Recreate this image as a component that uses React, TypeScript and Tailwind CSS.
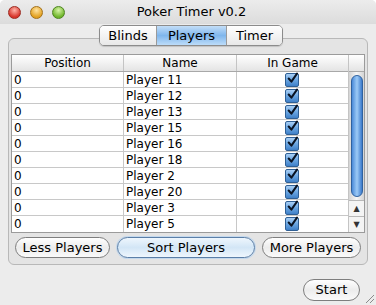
import React from "react"

const players = [
  "Player 11",
  "Player 12",
  "Player 13",
  "Player 15",
  "Player 16",
  "Player 18",
  "Player 2",
  "Player 20",
  "Player 3",
  "Player 5",
]

function Light({ from, to, ring }: { from: string; to: string; ring: string }) {
  return (
    <div
      className="w-[13px] h-[13px] rounded-full border"
      style={{ background: `radial-gradient(circle at 50% 30%, ${from}, ${to} 70%)`, borderColor: ring }}
    />
  )
}

function Check() {
  return (
    <div className="w-[14px] h-[14px] rounded-[2px] border border-[#2f5f94] bg-gradient-to-b from-[#a9cff5] via-[#6aa6e2] to-[#3f80c8] flex items-center justify-center">
      <svg width="13" height="13" viewBox="0 0 13 13" className="-mt-[3px] ml-[1px]">
        <path d="M2 6.5 L5.2 10.2 L11.8 0.8" fill="none" stroke="#0a1424" strokeWidth="2.4" strokeLinecap="round" strokeLinejoin="round" />
      </svg>
    </div>
  )
}

function Pill({ children, primary, className }: { children: React.ReactNode; primary?: boolean; className?: string }) {
  return (
    <button
      className={
        "h-[21px] rounded-full border text-[13px] text-black flex items-center justify-center " +
        (primary
          ? "border-[#5b7fa8] bg-gradient-to-b from-[#eef6fd] via-[#d3e6f6] to-[#eef6fd] shadow-[0_0_0_1px_#c4d8ec] "
          : "border-[#7e7e7e] bg-gradient-to-b from-[#ffffff] via-[#ececec] to-[#fafafa] ") +
        (className ?? "")
      }
    >
      {children}
    </button>
  )
}

export default function App() {
  return (
    <div
      className="w-[376px] h-[305px] bg-[#ececec] flex flex-col overflow-hidden rounded-t-[5px]"
      style={{ fontFamily: '"DejaVu Sans", "Liberation Sans", sans-serif' }}
    >
      {/* title bar */}
      <div className="h-[24px] flex items-center px-[8px] bg-gradient-to-b from-[#ececec] to-[#dcdcdc] relative">
        <div className="flex gap-[9px] pt-[1px]">
          <Light from="#ffb3a8" to="#d7342a" ring="#9c2a20" />
          <Light from="#ffe3a0" to="#e2a01f" ring="#a2701a" />
          <Light from="#d8f5a8" to="#6fb52a" ring="#4d8420" />
        </div>
        <div className="flex-1 text-center text-[13px] text-black pr-[60px] pl-[10px]">Poker Timer v0.2</div>
      </div>

      {/* tabs */}
      <div className="flex justify-center pl-[6px] mt-[1px] -mb-[8px] relative z-10">
        <div className="flex h-[21px] rounded-[5px] border border-[#8c8c8c] overflow-hidden text-[13px] text-black shadow-[0_1px_1px_rgba(0,0,0,0.15)]">
          <div className="w-[57px] flex items-center justify-center bg-gradient-to-b from-[#ffffff] to-[#e8e8e8] border-r border-[#9a9a9a]">Blinds</div>
          <div className="w-[69px] flex items-center justify-center bg-gradient-to-b from-[#c3def8] via-[#7fb6ec] to-[#bcdcf9]">Players</div>
          <div className="w-[56px] flex items-center justify-center bg-gradient-to-b from-[#ffffff] to-[#e8e8e8] border-l border-[#9a9a9a]">Timer</div>
        </div>
      </div>

      {/* group box */}
      <div className="mx-[8px] h-[227px] border border-[#b8b8b8] rounded-[6px] bg-[#e4e4e4] px-[2px] pt-[15px] flex flex-col">
        <div className="border border-[#9b9b9b] bg-white flex">
          <div className="flex-1">
            <div className="flex h-[17px] text-[12px] text-black bg-gradient-to-b from-[#ffffff] to-[#e4e4e4] border-b border-[#a8a8a8]">
              <div className="w-[112px] flex items-center justify-center border-r border-[#c4c4c4]">Position</div>
              <div className="w-[113px] flex items-center justify-center border-r border-[#c4c4c4]">Name</div>
              <div className="flex-1 flex items-center justify-center">In Game</div>
            </div>
            {players.map((p) => (
              <div key={p} className="flex h-[16px] text-[12px] text-black border-b border-[#c8c8c8] last:border-b-0">
                <div className="w-[112px] pl-[2px] flex items-center border-r border-[#c8c8c8]">0</div>
                <div className="w-[113px] pl-[2px] flex items-center border-r border-[#c8c8c8]">{p}</div>
                <div className="flex-1 flex items-center justify-center pr-[1px]">
                  <Check />
                </div>
              </div>
            ))}
          </div>
          {/* scrollbar */}
          <div className="w-[16px] border-l border-[#c4c4c4] flex flex-col bg-[#f4f4f4]">
            <div className="h-[17px] bg-gradient-to-b from-[#ffffff] to-[#e4e4e4] border-b border-[#a8a8a8]" />
            <div className="flex-1 flex flex-col items-center pt-[3px] pb-[2px] bg-gradient-to-r from-[#d4d4d4] via-[#f6f6f6] to-[#d4d4d4]">
              <div className="w-[12px] h-[122px] rounded-full border border-[#2f62a0] bg-gradient-to-r from-[#4a8ad8] via-[#9ccaf6] to-[#3b7acb]" />
            </div>
            <div className="h-[16px] flex items-center justify-center border-t border-[#b8b8b8] text-[8px] text-[#333]">▲</div>
            <div className="h-[16px] flex items-center justify-center border-t border-[#b8b8b8] text-[8px] text-[#333]">▼</div>
          </div>
        </div>
        <div className="flex items-center justify-between px-[4px] mt-[4px]">
          <Pill className="w-[95px]">Less Players</Pill>
          <Pill primary className="w-[138px]">Sort Players</Pill>
          <Pill className="w-[99px]">More Players</Pill>
        </div>
      </div>

      {/* bottom */}
      <div className="flex justify-end pr-[16px] mt-[14px] relative flex-1">
        <Pill className="w-[57px] h-[22px]">Start</Pill>
        <svg width="12" height="12" viewBox="0 0 12 12" className="absolute right-[1px] bottom-[1px]">
          <path d="M11 3 L3 11 M11 7 L7 11" stroke="#8a8a8a" strokeWidth="1" />
        </svg>
      </div>
    </div>
  )
}
